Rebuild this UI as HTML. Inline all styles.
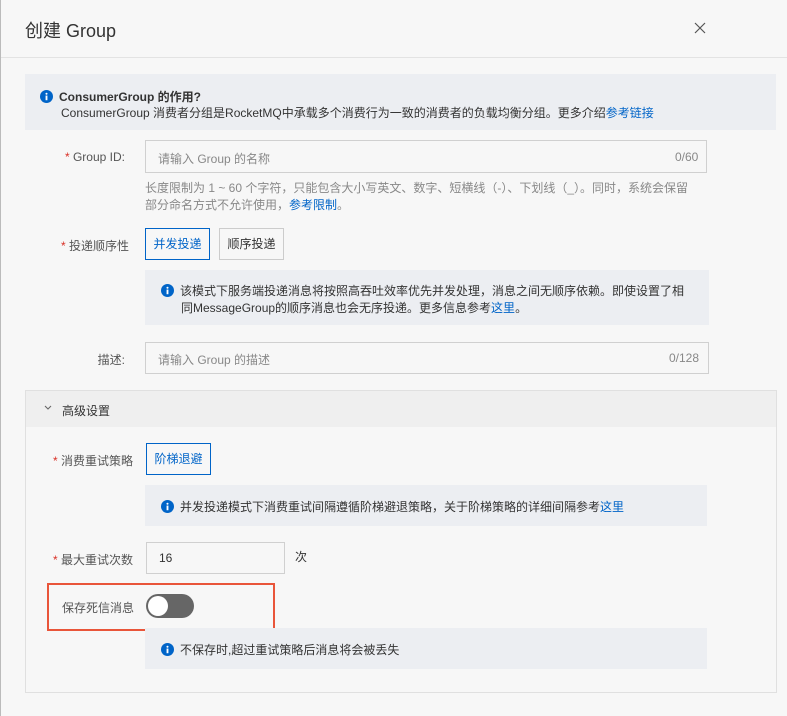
<!DOCTYPE html>
<html><head><meta charset="utf-8"><style>
*{box-sizing:border-box;margin:0;padding:0}
body{width:787px;height:716px;background:#f7f7f7;font-family:"Liberation Sans","Noto Sans CJK SC",sans-serif;font-size:12px;color:#333;position:relative;overflow:hidden;border-left:1px solid #bbb}
.a{position:absolute;white-space:nowrap}
.box{position:absolute;background:#eceef2}
.inp{position:absolute;border:1px solid #d0d0d0;background:#f7f7f7}
.ph{color:#888}
.lbl{position:absolute;text-align:right;color:#555;font-size:12px}
.lbl b{color:#d93026;font-weight:normal}
.btn{position:absolute;border:1px solid #ccc;background:#f7f7f7;text-align:center;line-height:30px;color:#333}
.btn.on{border-color:#0064c8;color:#0064c8}
.i{display:inline-block;width:13px;height:13px;vertical-align:-2px;margin-right:6px}
a{color:#0064c8;text-decoration:none}
</style></head><body>
<div class="a" style="left:24px;top:17px;font-size:18px;color:#333">创建 Group</div>
<svg style="position:absolute;left:693px;top:22px" width="12" height="12" viewBox="0 0 12 12"><path d="M1 1L11 11M11 1L1 11" stroke="#555" stroke-width="1.2" fill="none"/></svg>
<div style="position:absolute;left:0;top:57px;width:787px;height:1px;background:#e3e3e3"></div>

<div class="box" style="left:24px;top:74px;width:751px;height:56px"></div>
<div class="a" style="left:39px;top:88px;font-weight:bold;color:#333"><svg class="i" viewBox="0 0 14 14"><circle cx="7" cy="7" r="7" fill="#0064c8"/><rect x="6" y="6" width="2" height="5" fill="#fff"/><circle cx="7" cy="4" r="1.1" fill="#fff"/></svg>ConsumerGroup 的作用?</div>
<div class="a" style="left:60px;top:104px;color:#333">ConsumerGroup 消费者分组是RocketMQ中承载多个消费行为一致的消费者的负载均衡分组。更多介绍<a>参考链接</a></div>

<div class="lbl" style="left:40px;top:150px;width:84px"><b>*</b> Group ID:</div>
<div class="inp" style="left:144px;top:140px;width:562px;height:33px"></div>
<div class="a ph" style="left:157px;top:150px">请输入 Group 的名称</div>
<div class="a ph" style="left:674px;top:150px">0/60</div>
<div class="a" style="left:144px;top:179px;color:#888">长度限制为 1 ~ 60 个字符，只能包含大小写英文、数字、短横线（-）、下划线（_）。同时，系统会保留</div>
<div class="a" style="left:144px;top:196px;color:#888">部分命名方式不允许使用，<a>参考限制</a>。</div>

<div class="lbl" style="left:40px;top:237px;width:88px"><b>*</b> 投递顺序性</div>
<div class="btn on" style="left:144px;top:228px;width:65px;height:32px">并发投递</div>
<div class="btn" style="left:218px;top:228px;width:65px;height:32px">顺序投递</div>

<div class="box" style="left:144px;top:270px;width:564px;height:55px"></div>
<div class="a" style="left:160px;top:282px"><svg class="i" viewBox="0 0 14 14"><circle cx="7" cy="7" r="7" fill="#0064c8"/><rect x="6" y="6" width="2" height="5" fill="#fff"/><circle cx="7" cy="4" r="1.1" fill="#fff"/></svg>该模式下服务端投递消息将按照高吞吐效率优先并发处理，消息之间无顺序依赖。即使设置了相</div>
<div class="a" style="left:180px;top:299px">同MessageGroup的顺序消息也会无序投递。更多信息参考<a>这里</a>。</div>

<div class="lbl" style="left:40px;top:351px;width:84px">描述:</div>
<div class="inp" style="left:144px;top:342px;width:564px;height:32px"></div>
<div class="a ph" style="left:157px;top:351px">请输入 Group 的描述</div>
<div class="a ph" style="left:668px;top:351px">0/128</div>

<div style="position:absolute;left:24px;top:390px;width:752px;height:303px;border:1px solid #e0e0e0;background:#f7f7f7"></div>
<div style="position:absolute;left:25px;top:391px;width:750px;height:36px;background:#efefef"></div>
<svg style="position:absolute;left:43px;top:405px" width="8" height="6" viewBox="0 0 8 6"><path d="M1 1L4 4L7 1" stroke="#666" stroke-width="1.1" fill="none"/></svg>
<div class="a" style="left:61px;top:402px;color:#333">高级设置</div>

<div class="lbl" style="left:40px;top:452px;width:92px"><b>*</b> 消费重试策略</div>
<div class="btn on" style="left:145px;top:443px;width:65px;height:32px">阶梯退避</div>
<div class="box" style="left:144px;top:485px;width:562px;height:41px"></div>
<div class="a" style="left:160px;top:498px"><svg class="i" viewBox="0 0 14 14"><circle cx="7" cy="7" r="7" fill="#0064c8"/><rect x="6" y="6" width="2" height="5" fill="#fff"/><circle cx="7" cy="4" r="1.1" fill="#fff"/></svg>并发投递模式下消费重试间隔遵循阶梯避退策略，关于阶梯策略的详细间隔参考<a>这里</a></div>

<div class="lbl" style="left:40px;top:551px;width:92px"><b>*</b> 最大重试次数</div>
<div class="inp" style="left:145px;top:542px;width:139px;height:32px"></div>
<div class="a" style="left:158px;top:551px">16</div>
<div class="a" style="left:294px;top:548px">次</div>

<div style="position:absolute;left:46px;top:583px;width:228px;height:48px;border:2px solid #e9553a"></div>
<div class="a" style="left:61px;top:599px;color:#555">保存死信消息</div>
<div style="position:absolute;left:145px;top:594px;width:48px;height:24px;border-radius:12px;background:#666"></div>
<div style="position:absolute;left:147px;top:596px;width:20px;height:20px;border-radius:50%;background:#fff"></div>

<div class="box" style="left:144px;top:628px;width:562px;height:41px"></div>
<div class="a" style="left:160px;top:641px"><svg class="i" viewBox="0 0 14 14"><circle cx="7" cy="7" r="7" fill="#0064c8"/><rect x="6" y="6" width="2" height="5" fill="#fff"/><circle cx="7" cy="4" r="1.1" fill="#fff"/></svg>不保存时,超过重试策略后消息将会被丢失</div>
</body></html>
